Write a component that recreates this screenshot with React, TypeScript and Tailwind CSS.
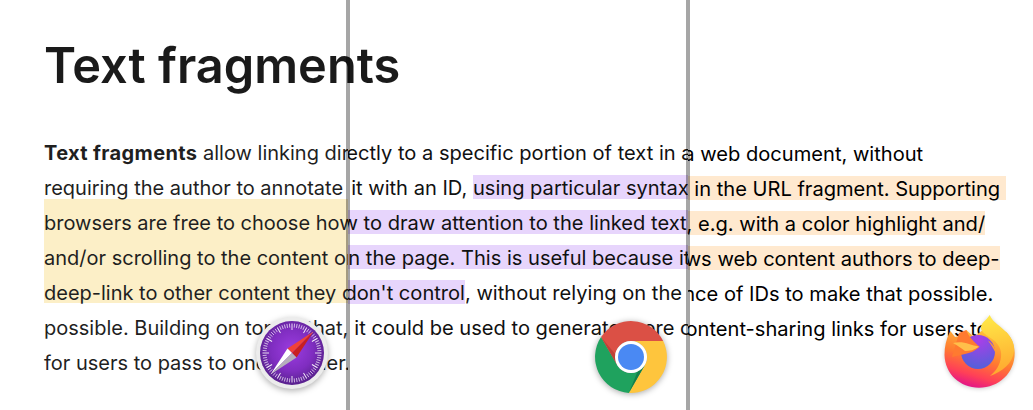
const LINES: string[] = [
  "requiring the author to annotate it with an ID, using particular syntax in the URL fragment. Supporting ",
  "browsers are free to choose how to draw attention to the linked text, e.g. with a color highlight and/",
  "and/or scrolling to the content on the page. This is useful because it allows web content authors to deep-",
  "deep-link to other content they don't control, without relying on the presence of IDs to make that possible.",
  "possible. Building on top of that, it could be used to generate more content-sharing links for users to pass",
  "for users to pass to one another.",
];

function Line({
  text,
  from,
  to,
  mark,
  shift,
}: {
  text: string;
  from?: string;
  to?: string;
  mark?: string;
  shift?: string;
}) {
  const base = `h-[35px] leading-[35px] whitespace-pre ${shift ?? ""}`;
  if (!mark) return <div className={base}>{text}</div>;
  const a = from ? text.indexOf(from) : 0;
  const b = to ? text.indexOf(to) + to.length : text.length;
  return (
    <div className={base}>
      {text.slice(0, a)}
      <span className={`inline-block h-[24px] leading-[26px] ${mark}`}>{text.slice(a, b)}</span>
      {text.slice(b)}
    </div>
  );
}

function Head({ titleShift, boldTrack, firstShift }: { titleShift?: string; boldTrack?: string; firstShift?: string }) {
  return (
    <>
      <h1 className={`text-[48.7px] leading-[60px] font-semibold text-[#1a1a1a] whitespace-pre ${titleShift ?? ""}`}>
        Text fragments
      </h1>
      <div className={`h-[35px] mt-[40px] leading-[35px] whitespace-pre ${firstShift ?? ""}`}>
        <b className={`font-bold ${boldTrack ?? ""}`}>Text fragments</b> allow linking directly to a specific portion of text in a web document, without
      </div>
    </>
  );
}

function Chrome() {
  return (
    <svg viewBox="0 0 72 72" className="w-[72px] h-[72px] drop-shadow-[0_1px_3px_rgba(0,0,0,0.35)]">
      <path d="M36 20H68.2A36 36 0 0 0 6.03 16.1L22.14 44A16 16 0 0 1 36 20Z" fill="#DB5045" />
      <path d="M68.2 20A36 36 0 0 1 33.76 71.9L49.86 44A16 16 0 0 0 36 20Z" fill="#FEC53D" />
      <path d="M33.76 71.9A36 36 0 0 1 6.03 16.1L22.14 44A16 16 0 0 0 49.86 44Z" fill="#1FA25E" />
      <path d="M6.03 16.1L22.14 44L23.5 37Z" fill="#BE4238" />
      <path d="M33.76 71.9L49.86 44L43 49.5Z" fill="#168049" />
      <circle cx="36" cy="36" r="16" fill="#fff" />
      <circle cx="36" cy="36" r="13" fill="#4A89F3" />
    </svg>
  );
}

function Safari() {
  const ticks = Array.from({ length: 72 }, (_, i) => i * 5);
  return (
    <svg viewBox="0 0 76 76" className="w-[76px] h-[76px] drop-shadow-[0_2px_3px_rgba(0,0,0,0.3)]">
      <defs>
        <radialGradient id="sp" cx="50%" cy="45%" r="55%">
          <stop offset="0%" stopColor="#9b3ce0" />
          <stop offset="60%" stopColor="#7f2dc0" />
          <stop offset="100%" stopColor="#57208c" />
        </radialGradient>
      </defs>
      <circle cx="38" cy="38" r="36" fill="#ececec" />
      <circle cx="38" cy="38" r="32" fill="url(#sp)" />
      {ticks.map((t) => (
        <line
          key={t}
          x1="38"
          y1="8.5"
          x2="38"
          y2={t % 30 === 0 ? 15 : 12.5}
          stroke="#fff"
          strokeOpacity={t % 30 === 0 ? 0.95 : 0.7}
          strokeWidth="0.9"
          transform={`rotate(${t} 38 38)`}
        />
      ))}
      <path d="M59.5 16.5L33.5 33.5L38 38Z" fill="#f04238" />
      <path d="M59.5 16.5L42.5 42.5L38 38Z" fill="#c8201f" />
      <path d="M16.5 59.5L33.5 33.5L38 38Z" fill="#ffffff" />
      <path d="M16.5 59.5L42.5 42.5L38 38Z" fill="#b5b0bb" />
    </svg>
  );
}

function Firefox() {
  return (
    <svg viewBox="0 0 72 74" className="w-[72px] h-[74px] drop-shadow-[0_1px_2px_rgba(0,0,0,0.2)]">
      <defs>
        <linearGradient id="fb" x1="0.75" y1="0.05" x2="0.4" y2="1">
          <stop offset="0%" stopColor="#ffc83a" />
          <stop offset="50%" stopColor="#ff7c30" />
          <stop offset="80%" stopColor="#ff4057" />
          <stop offset="100%" stopColor="#e31587" />
        </linearGradient>
        <linearGradient id="fy" x1="0.5" y1="0" x2="0.6" y2="1">
          <stop offset="0%" stopColor="#ffe847" />
          <stop offset="100%" stopColor="#ffa52e" />
        </linearGradient>
        <radialGradient id="fg" cx="55%" cy="15%" r="90%">
          <stop offset="0%" stopColor="#a83fe8" />
          <stop offset="100%" stopColor="#4f62d8" />
        </radialGradient>
      </defs>
      <path d="M6.3 16C2 24 .5 32 .5 40C1 59 16 72.7 35 72.7C55 72.7 70.7 58 70.7 38C70.7 29 67 22 62 16.7L40 14L30 22L22.3 15L16 21L11 22Z" fill="url(#fb)" />
      <path d="M45.7 0C42 6 36 8 37 14C38 17 41 19 45 22C54 27 58 34 57 42C56 50 52 56 46 61C58 57 69 48 70 36C70.5 26 66 21 62 17C57 11 49 8 45.7 0Z" fill="url(#fy)" />
      <circle cx="34" cy="37" r="17" fill="url(#fg)" />
      <path d="M44 25.5C49 29 52 33 51.5 38C50 34 47 30 44 25.5Z" fill="#ff9a36" />
      <path d="M15 18L22.3 15C24 21 30 27 35.7 31.7C31 36 26 38 21 39L8 42Z" fill="#ff7a30" />
      <path d="M9 28C14 26.5 20 27 25 29C28 30 32 31 35 31.7C30 35 26 36 21 36C17 33 13 30 9 28Z" fill="#ffbf4a" />
    </svg>
  );
}

function Panel({
  width,
  inner,
  className,
  children,
}: {
  width: string;
  inner: string;
  className: string;
  children: React.ReactNode;
}) {
  return (
    <div className={`${width} h-full flex-none overflow-hidden ${className}`}>
      <div className={`w-[1200px] ${inner}`}>{children}</div>
    </div>
  );
}

export default function App() {
  const pos = "bg-[#e7d5fc]";
  const orange = "bg-[#ffe9cf]";
  return (
    <div
      className="relative flex w-[1033px] h-[410px] overflow-hidden bg-white"
      style={{ fontFamily: "Inter, sans-serif" }}
    >
      <Panel width="w-[348px]" inner="pl-[44px] pt-[36px] text-[20px]" className="text-[#1f1f1f] antialiased">
        <Head boldTrack="tracking-[0.36px]" />
        <Line text={LINES[0]} />
        <div className="bg-[#fcefc7] -mt-[7px] pt-[7px] h-[104px] mb-[8px]">
          <Line text={LINES[1]} />
          <Line text={LINES[2]} />
          <Line text={LINES[3]} />
        </div>
        <Line text={LINES[4]} />
        <Line text={LINES[5]} />
      </Panel>
      <Panel width="w-[340px]" inner="pl-[45px] -ml-[348px] pt-[36px] text-[20.1px]" className="text-[#111]">
        <Head titleShift="-ml-[1px]" />
        <Line text={LINES[0]} mark={pos} from="using" />
        <Line text={LINES[1]} mark={pos} />
        <Line text={LINES[2]} mark={pos} />
        <Line text={LINES[3]} mark={pos} to="control" />
        <Line text={LINES[4]} shift="-ml-[2px]" />
      </Panel>
      <Panel width="w-[345px]" inner="pl-[45px] -ml-[688px] pt-[37px] text-[20.1px]" className="text-black">
        <Head titleShift="-ml-[1px]" firstShift="ml-[2px]" />
        <Line text={LINES[0]} mark={orange} from="using" />
        <Line text={LINES[1]} mark={orange} />
        <Line text={LINES[2]} mark={orange} shift="-ml-[44px]" />
        <Line text={LINES[3]} shift="-ml-[58px]" />
        <Line text={LINES[4].replace(" pass", "")} shift="-ml-[8px]" />
      </Panel>
      <div className="absolute left-[346px] top-0 w-[4px] h-full bg-black/35" />
      <div className="absolute left-[686px] top-0 w-[4px] h-full bg-black/35" />
      <div className="absolute left-[253.5px] top-[315px]"><Safari /></div>
      <div className="absolute left-[594.5px] top-[320.5px]"><Chrome /></div>
      <div className="absolute left-[944px] top-[315px]"><Firefox /></div>
    </div>
  );
}
